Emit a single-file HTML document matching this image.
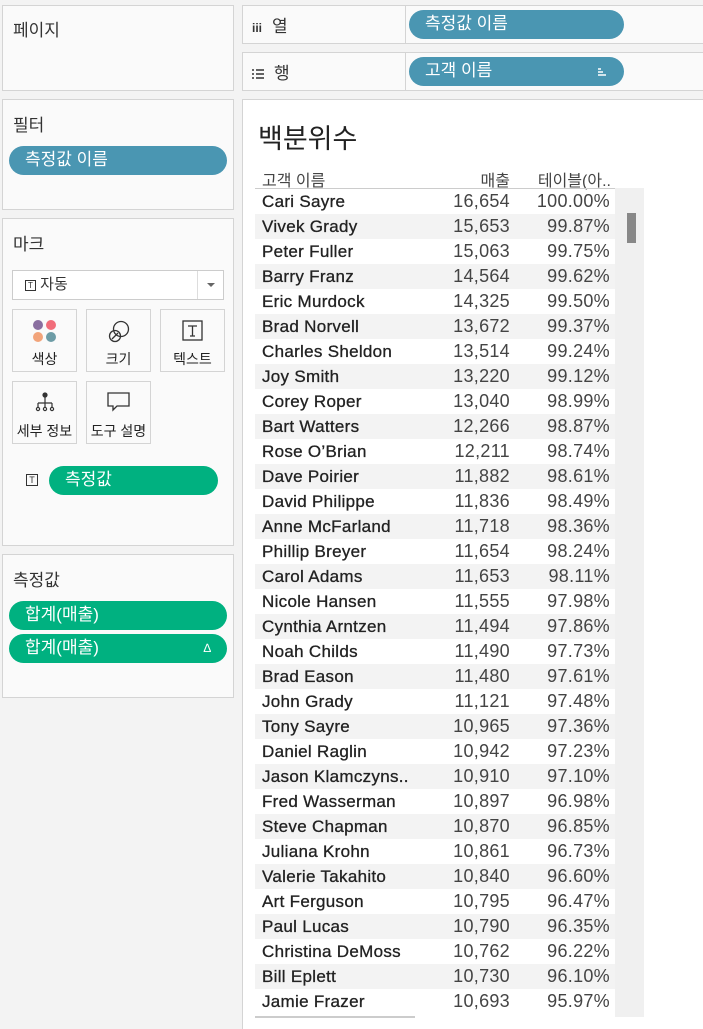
<!DOCTYPE html>
<html><head><meta charset="utf-8"><style>
*{box-sizing:border-box;margin:0;padding:0}
body{width:703px;height:1023px;background:#f3f3f3;font-family:"Liberation Sans","Noto Sans CJK KR",sans-serif;position:relative;overflow:hidden;color:#333}
.p{position:absolute;background:#fafafa;border:1px solid #d4d4d4}
.t{position:absolute;font-size:17px;color:#333}
.pill{position:absolute;height:29px;border-radius:15px;color:#fff;font-size:17px;line-height:28px;padding-left:16px}
.blue{background:#4a96b2}.green{background:#00b180}
.btn{position:absolute;width:65px;height:63px;border:1px solid #d4d4d4;background:#fafafa;font-size:14px;text-align:center;color:#222}
.btn span{position:absolute;left:0;right:0;bottom:2px}
.row{position:absolute;left:255px;width:360px;height:25px;font-size:17px;line-height:25px;color:#333}
.row.s{background:#f3f3f3}
.row .n{position:absolute;left:7px;color:#222;letter-spacing:0.3px;-webkit-text-stroke:0.3px #222}
.row .a{position:absolute;right:105px;font-size:18px;letter-spacing:0.3px;color:#444}
.row .b{position:absolute;right:5px;font-size:18px;letter-spacing:0.3px;color:#444}
</style></head><body>
<div class="p" style="left:2px;top:5px;width:232px;height:86px"></div>
<div class="t" style="left:13px;top:16px">페이지</div>
<div class="p" style="left:2px;top:99px;width:232px;height:111px"></div>
<div class="t" style="left:13px;top:111px">필터</div>
<div class="pill blue" style="left:9px;top:146px;width:218px">측정값 이름</div>
<div class="p" style="left:2px;top:218px;width:232px;height:328px"></div>
<div class="t" style="left:13px;top:230px">마크</div>
<div style="position:absolute;left:12px;top:270px;width:212px;height:30px;border:1px solid #ccc;background:#fff;font-size:15px;line-height:28px;padding-left:12px">
<span style="display:inline-block;width:11px;height:11px;border:1px solid #333;font-size:8px;line-height:9px;text-align:center;vertical-align:1px">T</span> 자동
<div style="position:absolute;right:0;top:0;width:26px;height:28px;border-left:1px solid #ddd"><div style="position:absolute;left:9px;top:12px;border:4px solid transparent;border-top:4px solid #666"></div></div></div>
<div class="btn" style="left:12px;top:309px">
<svg width="26" height="26" style="position:absolute;left:19px;top:9px"><circle cx="6" cy="6" r="5" fill="#8a6fa0"/><circle cx="19" cy="6" r="5" fill="#f16d7a"/><circle cx="6" cy="18" r="5" fill="#f2a47a"/><circle cx="19" cy="18" r="5" fill="#6d9ca6"/></svg><span>색상</span></div>
<div class="btn" style="left:86px;top:309px">
<svg width="26" height="26" style="position:absolute;left:19px;top:9px" fill="none" stroke="#333" stroke-width="1.3"><circle cx="15" cy="10" r="7.5"/><circle cx="9" cy="17" r="5.5"/><line x1="6" y1="20" x2="12" y2="14"/></svg><span>크기</span></div>
<div class="btn" style="left:160px;top:309px">
<svg width="22" height="22" style="position:absolute;left:21px;top:10px" fill="none" stroke="#333" stroke-width="1.3"><rect x="1" y="1" width="19" height="19"/><path d="M6 6h9M10.5 6v10M8 16h5"/></svg><span>텍스트</span></div>
<div class="btn" style="left:12px;top:381px">
<svg width="22" height="22" style="position:absolute;left:21px;top:10px" fill="none" stroke="#333" stroke-width="1.2"><circle cx="11" cy="3" r="2" fill="#333"/><path d="M11 5v6M4 11h14M4 11v4M11 11v4M18 11v4"/><circle cx="4" cy="17" r="1.6"/><circle cx="11" cy="17" r="1.6"/><circle cx="18" cy="17" r="1.6"/></svg><span>세부 정보</span></div>
<div class="btn" style="left:86px;top:381px">
<svg width="24" height="22" style="position:absolute;left:20px;top:10px" fill="none" stroke="#333" stroke-width="1.3"><path d="M1 1h21v13H10l-4 4v-4H1z"/></svg><span>도구 설명</span></div>
<span style="position:absolute;left:26px;top:474px;width:12px;height:12px;border:1px solid #333;font-size:9px;line-height:10px;text-align:center">T</span>
<div class="pill green" style="left:49px;top:466px;width:169px">측정값</div>
<div class="p" style="left:2px;top:554px;width:232px;height:144px"></div>
<div class="t" style="left:13px;top:566px">측정값</div>
<div class="pill green" style="left:9px;top:601px;width:218px">합계(매출)</div>
<div class="pill green" style="left:9px;top:634px;width:218px">합계(매출)<span style="position:absolute;right:16px;font-size:12px">∆</span></div>

<div class="p" style="left:242px;top:5px;width:470px;height:39px"></div>
<div style="position:absolute;left:405px;top:6px;width:1px;height:37px;background:#d4d4d4"></div>
<div class="t" style="left:252px;top:12px"><span style="font-size:12px;font-weight:bold;margin-right:10px">iii</span>열</div>
<div class="pill blue" style="left:409px;top:10px;width:215px">측정값 이름</div>
<div class="p" style="left:242px;top:52px;width:470px;height:39px"></div>
<div style="position:absolute;left:405px;top:53px;width:1px;height:37px;background:#d4d4d4"></div>
<div class="t" style="left:252px;top:59px"><svg width="12" height="10" style="margin-right:10px"><path d="M0 1h2M4 1h8M0 5h2M4 5h8M0 9h2M4 9h8" stroke="#333" stroke-width="1.5"/></svg>행</div>
<div class="pill blue" style="left:409px;top:57px;width:215px">고객 이름<svg width="10" height="10" style="position:absolute;right:17px;top:10px"><path d="M1 2h3M1 5h5M1 8h8" stroke="#fff" stroke-width="1.5"/></svg></div>

<div style="position:absolute;left:242px;top:99px;width:470px;height:930px;background:#fff;border-left:1px solid #d4d4d4;border-top:1px solid #d4d4d4"></div>
<div style="position:absolute;left:258px;top:117px;font-size:27px;color:#222">백분위수</div>
<div style="position:absolute;left:262px;top:167px;font-size:16px;color:#444">고객 이름</div>
<div style="position:absolute;right:193px;top:167px;font-size:16px;color:#444">매출</div>
<div style="position:absolute;right:92px;top:167px;font-size:16px;color:#444">테이블(아..</div>
<div style="position:absolute;left:255px;top:188px;width:360px;height:1px;background:#ccc"></div>
<div style="position:absolute;left:615px;top:188px;width:29px;height:829px;background:#f0f0f0"></div>
<div style="position:absolute;left:627px;top:213px;width:9px;height:30px;background:#888"></div>
<div style="position:absolute;left:255px;top:1016px;width:160px;height:2px;background:#ccc"></div>
<div class="row" style="top:189px"><span class="n">Cari Sayre</span><span class="a">16,654</span><span class="b">100.00%</span></div>
<div class="row s" style="top:214px"><span class="n">Vivek Grady</span><span class="a">15,653</span><span class="b">99.87%</span></div>
<div class="row" style="top:239px"><span class="n">Peter Fuller</span><span class="a">15,063</span><span class="b">99.75%</span></div>
<div class="row s" style="top:264px"><span class="n">Barry Franz</span><span class="a">14,564</span><span class="b">99.62%</span></div>
<div class="row" style="top:289px"><span class="n">Eric Murdock</span><span class="a">14,325</span><span class="b">99.50%</span></div>
<div class="row s" style="top:314px"><span class="n">Brad Norvell</span><span class="a">13,672</span><span class="b">99.37%</span></div>
<div class="row" style="top:339px"><span class="n">Charles Sheldon</span><span class="a">13,514</span><span class="b">99.24%</span></div>
<div class="row s" style="top:364px"><span class="n">Joy Smith</span><span class="a">13,220</span><span class="b">99.12%</span></div>
<div class="row" style="top:389px"><span class="n">Corey Roper</span><span class="a">13,040</span><span class="b">98.99%</span></div>
<div class="row s" style="top:414px"><span class="n">Bart Watters</span><span class="a">12,266</span><span class="b">98.87%</span></div>
<div class="row" style="top:439px"><span class="n">Rose O’Brian</span><span class="a">12,211</span><span class="b">98.74%</span></div>
<div class="row s" style="top:464px"><span class="n">Dave Poirier</span><span class="a">11,882</span><span class="b">98.61%</span></div>
<div class="row" style="top:489px"><span class="n">David Philippe</span><span class="a">11,836</span><span class="b">98.49%</span></div>
<div class="row s" style="top:514px"><span class="n">Anne McFarland</span><span class="a">11,718</span><span class="b">98.36%</span></div>
<div class="row" style="top:539px"><span class="n">Phillip Breyer</span><span class="a">11,654</span><span class="b">98.24%</span></div>
<div class="row s" style="top:564px"><span class="n">Carol Adams</span><span class="a">11,653</span><span class="b">98.11%</span></div>
<div class="row" style="top:589px"><span class="n">Nicole Hansen</span><span class="a">11,555</span><span class="b">97.98%</span></div>
<div class="row s" style="top:614px"><span class="n">Cynthia Arntzen</span><span class="a">11,494</span><span class="b">97.86%</span></div>
<div class="row" style="top:639px"><span class="n">Noah Childs</span><span class="a">11,490</span><span class="b">97.73%</span></div>
<div class="row s" style="top:664px"><span class="n">Brad Eason</span><span class="a">11,480</span><span class="b">97.61%</span></div>
<div class="row" style="top:689px"><span class="n">John Grady</span><span class="a">11,121</span><span class="b">97.48%</span></div>
<div class="row s" style="top:714px"><span class="n">Tony Sayre</span><span class="a">10,965</span><span class="b">97.36%</span></div>
<div class="row" style="top:739px"><span class="n">Daniel Raglin</span><span class="a">10,942</span><span class="b">97.23%</span></div>
<div class="row s" style="top:764px"><span class="n">Jason Klamczyns..</span><span class="a">10,910</span><span class="b">97.10%</span></div>
<div class="row" style="top:789px"><span class="n">Fred Wasserman</span><span class="a">10,897</span><span class="b">96.98%</span></div>
<div class="row s" style="top:814px"><span class="n">Steve Chapman</span><span class="a">10,870</span><span class="b">96.85%</span></div>
<div class="row" style="top:839px"><span class="n">Juliana Krohn</span><span class="a">10,861</span><span class="b">96.73%</span></div>
<div class="row s" style="top:864px"><span class="n">Valerie Takahito</span><span class="a">10,840</span><span class="b">96.60%</span></div>
<div class="row" style="top:889px"><span class="n">Art Ferguson</span><span class="a">10,795</span><span class="b">96.47%</span></div>
<div class="row s" style="top:914px"><span class="n">Paul Lucas</span><span class="a">10,790</span><span class="b">96.35%</span></div>
<div class="row" style="top:939px"><span class="n">Christina DeMoss</span><span class="a">10,762</span><span class="b">96.22%</span></div>
<div class="row s" style="top:964px"><span class="n">Bill Eplett</span><span class="a">10,730</span><span class="b">96.10%</span></div>
<div class="row" style="top:989px"><span class="n">Jamie Frazer</span><span class="a">10,693</span><span class="b">95.97%</span></div>
</body></html>
